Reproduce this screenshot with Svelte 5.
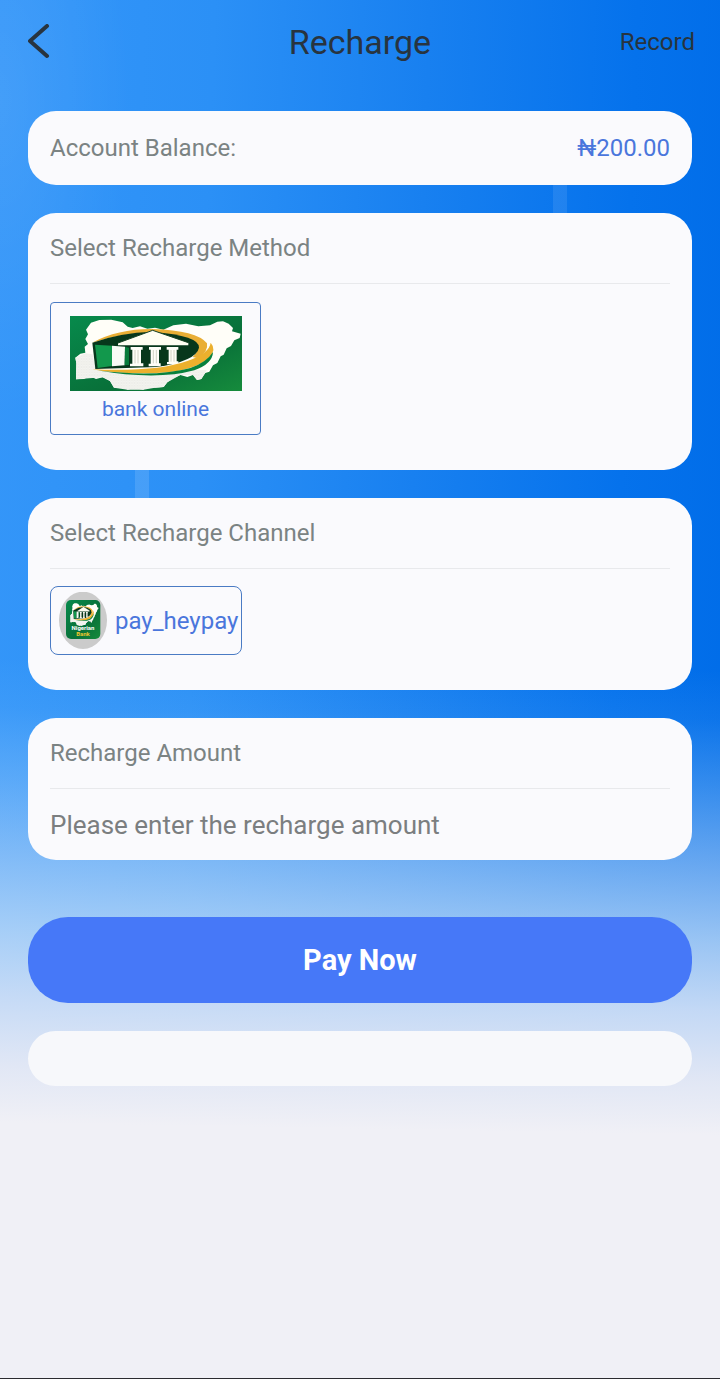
<script lang="ts">
  let balance = $state(200);
  let method = $state('bank online');
  let channel = $state('pay_heypay');
  let amount = $state('');

  const methods = ['bank online'];
  const channels = ['pay_heypay'];

  function goBack() {
    history.back();
  }

  function pay(e: SubmitEvent) {
    e.preventDefault();
    const value = Number(amount);
    if (value > 0) {
      balance += value;
      amount = '';
    }
  }
</script>

{#snippet emblem()}
  <path
    fill="#fffef8"
    d="M108 253 L109 205 L106 188 L121 176 L136 173 L134 155 L144 147 L136 132 L144 118 L138 104 L153 83 L178 75 L214 74 L248 82 L263 95 L278 99 L300 94 L322 101 L345 98 L370 104 L400 91 L438 86 L475 94 L510 91 L532 80 L549 79 L566 86 L579 99 L576 109 L602 116 L599 129 L583 136 L573 153 L560 160 L551 179 L542 184 L532 204 L519 211 L508 230 L496 234 L484 252 L471 255 L459 240 L442 246 L421 240 L400 249 L382 262 L371 276 L345 278 L325 272 L310 284 L282 279 L263 284 L244 274 L222 278 L210 258 L188 247 L168 252 L149 243 L132 252 Z"
  />
  <path
    fill="url(#dots)"
    d="M108 253 L109 205 L106 188 L136 175 L158 178 L166 220 L250 236 L400 236 L470 225 L500 225 L484 252 L471 255 L459 240 L421 240 L382 262 L371 276 L345 278 L310 284 L263 284 L222 278 L210 258 L188 247 Z"
  />
  <path fill="#e9ae35" d="M156 143 Q235 101 338 102 Q470 106 501 145 Q506 170 474 190 L458 186 Q492 153 445 132 Q405 116 338 114 Q250 112 156 143 Z" />
  <path fill="#07371b" d="M157 143 Q240 113 338 110 Q480 122 477 158 Q469 198 350 216 L166 222 Z" />
  <path fill="#fffef2" d="M338 106 L445 143 V151 H234 V144 Z" />
  <path fill="none" stroke="#164022" stroke-width="3" d="M234 144 L338 106 L445 143" />
  <path fill="#12984c" d="M165 149 L216 152 L216 213 L173 219 Z" />
  <path fill="#f8fbf5" d="M216 152 L255 155 L254 211 L216 214 Z" />
  <path fill="#087b3a" d="M255 155 L267 158 L267 210 L254 211 Z" />
  <g fill="#fffef8">
    <path d="M272 156 H308 V164 H303 V205 H310 V214 H270 V206 H277 V164 H272 Z" />
    <path d="M327 156 H363 V164 H357 V205 H362 V214 H326 V206 H332 V164 H327 Z" />
    <path d="M380 156 H415 V164 H410 V199 H415 V208 H381 V201 H386 V164 H380 Z" />
  </g>
  <path fill="none" stroke="#b8bbaa" stroke-width="2" d="M285 165 V205 M294 165 V205 M340 165 V205 M349 165 V205 M393 165 V200 M402 165 V200" />
  <path fill="#ecb02d" d="M157 223 Q350 231 442 198 Q509 174 512 143 Q531 164 507 188 Q462 229 350 234 Q235 238 157 223 Z" />
  <path fill="#08813d" d="M170 226 Q350 248 451 219 Q500 202 519 171 Q518 206 463 226 Q350 257 170 226 Z" />
{/snippet}

<svg class="defs" aria-hidden="true">
  <defs>
    <linearGradient id="green" x1="0" y1="0" x2="1" y2="1">
      <stop offset="0" stop-color="#078a4c" />
      <stop offset="0.6" stop-color="#087039" />
      <stop offset="1" stop-color="#168b3c" />
    </linearGradient>
    <pattern id="dots" width="8" height="8" patternUnits="userSpaceOnUse">
      <rect width="8" height="8" fill="#f7f7f2" />
      <path d="M0 4 L4 0 L8 4 L4 8 Z" fill="none" stroke="#d5d8d3" />
    </pattern>
  </defs>
</svg>

<div class="page">
  <header>
    <button class="back" aria-label="Back" onclick={goBack}>
      <svg width="22" height="36" viewBox="0 0 22 36" aria-hidden="true">
        <path d="M19 2 L2 17 L19 32" />
      </svg>
    </button>
    <h1>Recharge</h1>
    <a class="record" href="#record">Record</a>
  </header>

  <form onsubmit={pay}>
    <section class="card balance">
      <span>Account Balance:</span>
      <span class="money">₦{balance.toFixed(2)}</span>
    </section>

    <section class="card">
      <h2>Select Recharge Method</h2>
      <div class="options">
        {#each methods as name}
          <button type="button" class="method" class:active={method === name} onclick={() => (method = name)}>
            <svg width="172" height="75" viewBox="90 63 516 225" aria-hidden="true">
              <rect x="90" y="63" width="516" height="225" fill="url(#green)" />
              {@render emblem()}
            </svg>
            <span>{name}</span>
          </button>
        {/each}
      </div>
    </section>

    <section class="card">
      <h2>Select Recharge Channel</h2>
      <div class="options channels">
        {#each channels as name}
          <button type="button" class="channel" class:active={channel === name} onclick={() => (channel = name)}>
            <svg width="48" height="57" viewBox="42 36 144 171" aria-hidden="true">
              <ellipse cx="114" cy="121" rx="72" ry="86" fill="#cbcbcb" />
              <rect x="63" y="60" width="103" height="117" rx="15" fill="url(#green)" />
              <g transform="translate(58 46) scale(0.17 0.32)">
                {@render emblem()}
              </g>
              <text x="114" y="151" fill="#fff">Nigerian</text>
              <text x="114" y="168" fill="#e9c62f">Bank</text>
            </svg>
            <span>{name}</span>
          </button>
        {/each}
      </div>
    </section>

    <section class="card">
      <h2><label for="amount">Recharge Amount</label></h2>
      <input id="amount" inputmode="decimal" placeholder="Please enter the recharge amount" bind:value={amount} />
    </section>

    <button class="pay">Pay Now</button>
    <div class="card notice"></div>
  </form>
</div>

<style>
  :global(body) {
    background: #f0f0f6;
  }

  .defs {
    position: absolute;
    width: 0;
    height: 0;
  }

  .page {
    box-sizing: border-box;
    min-height: 100vh;
    border-bottom: 1px solid #2b2b30;
    font-family: Roboto, sans-serif;
    font-size: 24px;
    color: #7b8383;
    /* faint light bars, fade to the page grey, soft glow on the left, blue base */
    background:
      linear-gradient(rgba(255, 255, 255, 0.09), rgba(255, 255, 255, 0.09)) 553px 150px / 14px 90px no-repeat,
      linear-gradient(rgba(255, 255, 255, 0.12), rgba(255, 255, 255, 0.12)) 135px 450px / 14px 70px no-repeat,
      linear-gradient(
        181deg,
        rgba(160, 210, 250, 0) 670px,
        rgba(165, 212, 250, 0.08) 720px,
        rgba(180, 215, 248, 0.3) 790px,
        rgba(195, 219, 247, 0.53) 865px,
        rgba(200, 223, 247, 0.76) 940px,
        rgba(207, 223, 246, 0.94) 1010px,
        rgba(229, 233, 245, 0.98) 1080px,
        #f0f0f6 1135px
      ),
      radial-gradient(ellipse 130px 320px at 0 100px, rgba(255, 255, 255, 0.08), transparent),
      linear-gradient(92deg, #3496f9 0%, #2b90f6 28%, #1880f0 56%, #0572ec 83%, #006ce8 100%);
  }

  header {
    display: grid;
    grid-template-columns: 1fr auto 1fr;
    align-items: center;
    height: 83px;
    padding: 0 25px;
    color: #28343f;
  }

  h1 {
    margin: 0;
    font-size: 34px;
    font-weight: 400;
    line-height: 40px;
  }

  button,
  input {
    padding: 0;
    border: 0;
    background: none;
    font: inherit;
    color: inherit;
  }

  button {
    cursor: pointer;
  }

  .back {
    display: flex;
    justify-self: start;
    padding-left: 3px;
  }

  .back path {
    fill: none;
    stroke: #28343f;
    stroke-width: 4;
    stroke-linecap: round;
    stroke-linejoin: round;
  }

  .record {
    justify-self: end;
    color: inherit;
    text-decoration: none;
  }

  form {
    display: flex;
    flex-direction: column;
    gap: 28px;
    padding: 28px;
  }

  .card {
    padding: 0 22px;
    border-radius: 28px;
    background: #fafafd;
  }

  .balance {
    display: flex;
    align-items: center;
    justify-content: space-between;
    height: 74px;
  }

  .money {
    color: #4a76dc;
  }

  h2 {
    margin: 0;
    border-bottom: 1px solid #e8e9ec;
    font-size: 24px;
    font-weight: 400;
    line-height: 70px;
  }

  .options {
    display: flex;
    gap: 20px;
    padding: 18px 0 35px;
  }

  .channels {
    padding-top: 17px;
  }

  .method,
  .channel {
    display: flex;
    align-items: center;
    box-sizing: border-box;
    border: 1px solid #d5d7dc;
  }

  .method {
    flex-direction: column;
    gap: 6px;
    width: 211px;
    height: 133px;
    padding-top: 13px;
    border-radius: 4px;
    font-size: 21px;
  }

  .channel {
    gap: 8px;
    width: 192px;
    height: 69px;
    padding-left: 8px;
    border-radius: 8px;
  }

  .channel svg {
    flex-shrink: 0;
  }

  .channel text {
    font-size: 18px;
    font-weight: 700;
    text-anchor: middle;
  }

  .active {
    border-color: #4a7bc4;
    color: #4a76dc;
  }

  input {
    display: block;
    width: 100%;
    height: 71px;
    font-size: 26px;
    outline: none;
  }

  input::placeholder {
    color: #7b7e80;
    opacity: 1;
  }

  .pay {
    height: 86px;
    margin-top: 29px;
    border-radius: 40px;
    background: #4678f8;
    color: #fff;
    font-size: 29px;
    font-weight: 700;
  }

  .notice {
    height: 55px;
    background: #f7f8fb;
  }
</style>
